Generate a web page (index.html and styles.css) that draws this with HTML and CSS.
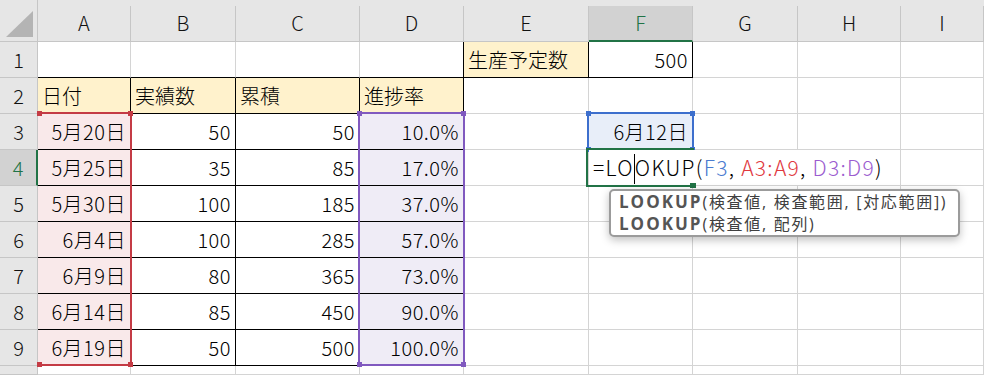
FILE: index.html
```html
<!doctype html>
<html>
	<head>
		<title>進捗表</title>
		<meta charset="utf-8" />
		<meta name="viewport" content="width=device-width, initial-scale=1" />
		<link rel="stylesheet" href="styles.css">
	</head>

	<body>

		<div class="sheet">
			<!-- column headers -->
			<div class="corner"><svg width="38" height="42"><polygon points="33,11 33,37 6,37" fill="#b4b4b4" /></svg></div>
			<div class="ch">A</div>
			<div class="ch">B</div>
			<div class="ch">C</div>
			<div class="ch">D</div>
			<div class="ch">E</div>
			<div class="ch cur">F</div>
			<div class="ch">G</div>
			<div class="ch">H</div>
			<div class="ch">I</div>

			<!-- row 1 -->
			<div class="rh">1</div>
			<div class="c bb"></div>
			<div class="c bb"></div>
			<div class="c bb"></div>
			<div class="c bb br"></div>
			<div class="c yl bb br">生産予定数</div>
			<div class="c num bb br">500</div>
			<div class="c"></div>
			<div class="c"></div>
			<div class="c"></div>

			<!-- row 2 -->
			<div class="rh">2</div>
			<div class="c yl bb br">日付</div>
			<div class="c yl bb br">実績数</div>
			<div class="c yl bb br">累積</div>
			<div class="c yl bb br">進捗率</div>
			<div class="c"></div>
			<div class="c"></div>
			<div class="c"></div>
			<div class="c"></div>
			<div class="c"></div>

			<!-- row 3 -->
			<div class="rh">3</div>
			<div class="c pk num bb br">5月20日</div>
			<div class="c num bb br">50</div>
			<div class="c num bb br">50</div>
			<div class="c pu num bb br">10.0%</div>
			<div class="c"></div>
			<div class="c bl num">6月12日</div>
			<div class="c"></div>
			<div class="c"></div>
			<div class="c"></div>

			<!-- row 4 -->
			<div class="rh cur">4</div>
			<div class="c pk num bb br">5月25日</div>
			<div class="c num bb br">35</div>
			<div class="c num bb br">85</div>
			<div class="c pu num bb br">17.0%</div>
			<div class="c"></div>
			<div class="c"></div>
			<div class="c"></div>
			<div class="c"></div>
			<div class="c"></div>

			<!-- row 5 -->
			<div class="rh">5</div>
			<div class="c pk num bb br">5月30日</div>
			<div class="c num bb br">100</div>
			<div class="c num bb br">185</div>
			<div class="c pu num bb br">37.0%</div>
			<div class="c"></div>
			<div class="c"></div>
			<div class="c"></div>
			<div class="c"></div>
			<div class="c"></div>

			<!-- row 6 -->
			<div class="rh">6</div>
			<div class="c pk num bb br">6月4日</div>
			<div class="c num bb br">100</div>
			<div class="c num bb br">285</div>
			<div class="c pu num bb br">57.0%</div>
			<div class="c"></div>
			<div class="c"></div>
			<div class="c"></div>
			<div class="c"></div>
			<div class="c"></div>

			<!-- row 7 -->
			<div class="rh">7</div>
			<div class="c pk num bb br">6月9日</div>
			<div class="c num bb br">80</div>
			<div class="c num bb br">365</div>
			<div class="c pu num bb br">73.0%</div>
			<div class="c"></div>
			<div class="c"></div>
			<div class="c"></div>
			<div class="c"></div>
			<div class="c"></div>

			<!-- row 8 -->
			<div class="rh">8</div>
			<div class="c pk num bb br">6月14日</div>
			<div class="c num bb br">85</div>
			<div class="c num bb br">450</div>
			<div class="c pu num bb br">90.0%</div>
			<div class="c"></div>
			<div class="c"></div>
			<div class="c"></div>
			<div class="c"></div>
			<div class="c"></div>

			<!-- row 9 -->
			<div class="rh">9</div>
			<div class="c pk num bb br">6月19日</div>
			<div class="c num bb br">50</div>
			<div class="c num bb br">500</div>
			<div class="c pu num bb br">100.0%</div>
			<div class="c"></div>
			<div class="c"></div>
			<div class="c"></div>
			<div class="c"></div>
			<div class="c"></div>

			<!-- row 10, cut off -->
			<div class="rh"></div>
			<div class="c"></div>
			<div class="c"></div>
			<div class="c"></div>
			<div class="c"></div>
			<div class="c"></div>
			<div class="c"></div>
			<div class="c"></div>
			<div class="c"></div>
			<div class="c"></div>

			<!-- range highlights from the formula -->
			<div class="range red-range">
				<span class="hd tl"></span><span class="hd tr"></span><span class="hd bl"></span><span class="hd br"></span>
			</div>
			<div class="range purple-range">
				<span class="hd tl"></span><span class="hd tr"></span><span class="hd bl"></span><span class="hd br"></span>
			</div>
			<div class="range blue-range">
				<span class="hd tl"></span><span class="hd tr"></span><span class="hd bl"></span><span class="hd br"></span>
			</div>

			<!-- cell editor for F4 -->
			<div class="editor">=LO<span class="caret"></span>OKUP(<span class="ref-f">F3</span>, <span class="ref-a">A3:A9</span>, <span class="ref-d">D3:D9</span>)</div>
			<div class="active-cell"><span class="fill-handle"></span></div>

			<div class="tip">
				<div><b>LOOKUP</b>(検査値, 検査範囲, [対応範囲])</div>
				<div><b>LOOKUP</b>(検査値, 配列)</div>
			</div>
		</div>

	</body>
</html>
```

FILE: styles.css
```css
body {
	margin: 0;
	background-color: white;
	font-family: "Noto Sans CJK JP", sans-serif;
	font-weight: 300;
}

.sheet {
	position: relative;
	display: grid;
	grid-template-columns: 38px 93px 105px 124px 104px 125px 104px 105px 103px 1fr;
	grid-template-rows: 42px repeat(9, 36px) 1fr;
	width: 984px;
	height: 375px;
	overflow: hidden;
	background-color: #e6e6e6;
}

.sheet div {
	box-sizing: border-box;
}

/* headers */

.corner {
	border-right: 1px solid #c6c6c6;
	border-bottom: 1px solid #c6c6c6;
}

.corner svg {
	display: block;
}

.ch {
	margin-top: 6px;
	background-color: #e6e6e6;
	border-right: 1px solid #c6c6c6;
	border-bottom: 1px solid #c6c6c6;
	color: #111;
	font-size: 20px;
	line-height: 34px;
	text-align: center;
}

.ch.cur {
	background-color: #d2d2d2;
	color: #217346;
	border-bottom: 2px solid #217346;
}

.rh {
	background-color: #e6e6e6;
	border-right: 1px solid #c6c6c6;
	border-bottom: 1px solid #c6c6c6;
	color: #111;
	font-size: 20px;
	line-height: 35px;
	text-align: center;
}

.rh.cur {
	background-color: #d2d2d2;
	color: #217346;
	border-right: 2px solid #217346;
}

/* cells */

.c {
	background-color: white;
	border-right: 1px solid #d4d4d4;
	border-bottom: 1px solid #d4d4d4;
	padding: 0 4px;
	color: #000;
	font-size: 20px;
	line-height: 35px;
	white-space: nowrap;
}

.num {
	text-align: right;
	letter-spacing: 0.5px;
}

.bb {
	border-bottom-color: black;
}

.br {
	border-right-color: black;
}

.yl {
	background-color: #fff2cc;
}

.pk {
	background-color: #f9e9ea;
}

.pu {
	background-color: #efecf6;
}

.bl {
	background-color: #e8eef9;
}

/* formula range highlights */

.range {
	position: absolute;
	box-sizing: border-box;
}

.red-range {
	left: 37px;
	top: 112px;
	width: 95px;
	height: 254px;
	border: 2px solid #c43b45;
	border-left: none;
}

.purple-range {
	left: 358px;
	top: 112px;
	width: 107px;
	height: 254px;
	border: 2px solid #8059bf;
}

.blue-range {
	left: 587px;
	top: 112px;
	width: 107px;
	height: 38px;
	border: 2px solid #3d6fcd;
	border-bottom: none;
}

.hd {
	position: absolute;
	width: 5px;
	height: 5px;
}

.red-range .hd { background-color: #c43b45; }
.purple-range .hd { background-color: #8059bf; }
.blue-range .hd { background-color: #3d6fcd; }

.hd.tl { left: -3px; top: -3px; }
.hd.tr { right: -3px; top: -3px; }
.hd.bl { left: -3px; bottom: -3px; }
.hd.br { right: -3px; bottom: -3px; }

.red-range .hd.tl,
.red-range .hd.bl { left: 0; }

.blue-range .hd.bl,
.blue-range .hd.br { bottom: -2px; }

/* in-cell editor */

.editor {
	position: absolute;
	left: 589px;
	top: 150px;
	height: 35px;
	padding: 0 6px 0 4px;
	background-color: white;
	color: #000;
	font-size: 21px;
	line-height: 35px;
	letter-spacing: 1.3px;
	white-space: nowrap;
}

.caret {
	display: inline-block;
	width: 0;
	height: 30px;
	border-left: 1px solid black;
	vertical-align: middle;
	margin-top: -3px;
}

.ref-f { color: #4a7bd0; }
.ref-a { color: #e0383e; }
.ref-d { color: #9b5ccf; }

.active-cell {
	position: absolute;
	left: 586px;
	top: 148px;
	width: 108px;
	height: 39px;
	border: 2px solid #217346;
	border-right: none;
}

.fill-handle {
	position: absolute;
	right: -2px;
	bottom: -3px;
	width: 6px;
	height: 5px;
	background-color: #217346;
}

/* function hint */

.tip {
	position: absolute;
	left: 609px;
	top: 189px;
	width: 351px;
	height: 48px;
	padding: 0 8px;
	border: 2px solid #9b9b9b;
	border-radius: 5px;
	background-color: white;
	box-shadow: 0 3px 8px rgba(0, 0, 0, 0.25);
	color: #404040;
	font-family: "Open Sans", "Noto Sans CJK JP", sans-serif;
	font-weight: 400;
	font-size: 16px;
	line-height: 22px;
	letter-spacing: 1.7px;
	white-space: nowrap;
}

.tip b {
	color: #555;
	font-size: 17px;
	letter-spacing: 2px;
}
```
